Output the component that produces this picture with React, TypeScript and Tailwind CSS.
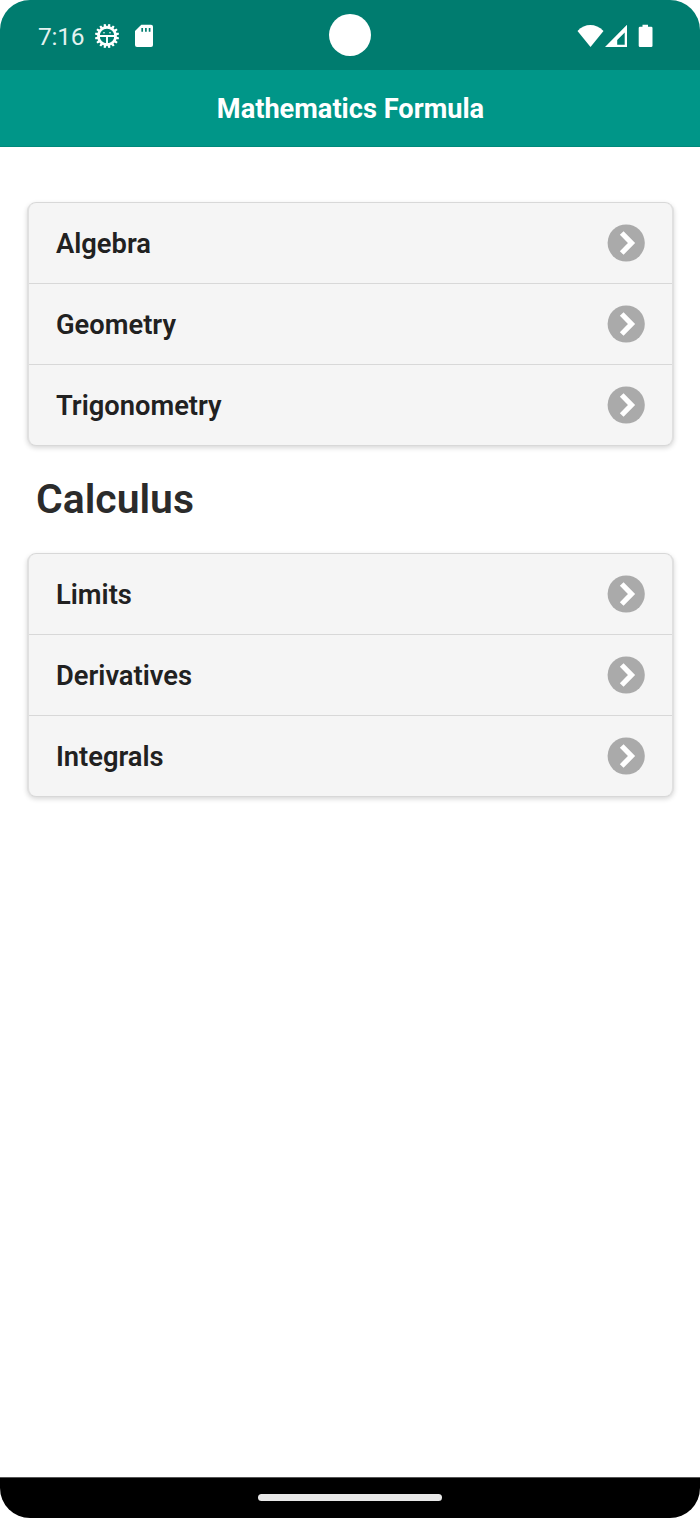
const basics = ["Algebra", "Geometry", "Trigonometry"];
const calculus = ["Limits", "Derivatives", "Integrals"];
const teeth = Array.from({ length: 16 }, (_, i) => 11.25 + i * 22.5);

function GearIcon() {
  return (
    <svg className="h-[26px] w-[26px]" viewBox="0 0 26 26" fill="none">
      <g fill="#fff">
        {teeth.map((a) => (
          <path key={a} d="M11.500 4.500L12 .9h2l.5 3.600z" transform={`rotate(${a} 13 13)`} />
        ))}
      </g>
      <circle cx="13" cy="13" r="8.600" stroke="#fff" strokeWidth="2.600" />
      <path d="M5 13h16M13 13v8" stroke="#fff" strokeWidth="1.900" />
      <circle cx="10" cy="9.800" r=".8" fill="#fff" />
      <circle cx="16" cy="9.800" r=".8" fill="#fff" />
    </svg>
  );
}

function StatusBar() {
  return (
    <div className="grid h-[70px] grid-cols-[1fr_42px_1fr] items-center bg-[#007c6f]">
      <div className="flex items-center pt-px pl-[38px]">
        <span className="w-[55.5px] pt-[2px] text-[24.5px] leading-8 tracking-[-0.2px] text-[#e4f2f0]">7:16</span>
        <GearIcon />
        <svg className="ml-[14.5px] h-6 w-[20px]" viewBox="0 0 20 24">
          <path d="M7.3 .7H17A2 2 0 0 1 19 2.7V21a2 2 0 0 1-2 2H3a2 2 0 0 1-2-2V7z" fill="#fff" />
          <path d="M8.2 4v3.8M11.9 4v3.8M15.6 4v3.8" stroke="#007c6f" strokeWidth="1.7" />
        </svg>
      </div>
      <div className="h-[42px] w-[42px] rounded-full bg-white" />
      <div className="flex items-center justify-end pt-px pr-[47px]">
        <svg className="h-6 w-[28px]" viewBox="0 0 28 24">
          <path d="M.5 7C8-.9 18.500-.9 26.500 7L13.500 23z" fill="#fff" />
        </svg>
        <svg className="h-6 w-[22px]" viewBox="0 0 22 24">
          <path d="M22 .7V23H0zM19.700 8.500L12.200 16v4.700h7.500z" fill="#fff" fillRule="evenodd" />
        </svg>
        <svg className="ml-[11px] h-6 w-[15px]" viewBox="0 0 15 24">
          <path d="M4.500 .7h5.500v2h3.200q1.300 0 1.300 1.300v17.700q0 1.300-1.300 1.300H2Q.7 23 .7 21.700V4Q.7 2.700 2 2.700h2.500z" fill="#fff" />
        </svg>
      </div>
    </div>
  );
}

function FormulaList({ items }: { items: string[] }) {
  return (
    <ul className="mr-[26px] ml-[27px] divide-y divide-[#d8d8d8] overflow-hidden rounded-[9px] border-x-2 border-y border-x-[#e0e0e0] border-y-[#d8d8d8] bg-[#f5f5f5] shadow-[0_2px_5px_rgba(0,0,0,0.16)]">
      {items.map((label) => (
        <li key={label} className="flex h-[81px] items-center justify-between px-[27px] last:h-[80px]">
          <span className="pt-[2px] text-[27.3px] leading-8 font-semibold text-[#212121]">{label}</span>
          <svg className="h-[38px] w-[38px]" viewBox="0 0 38 38" fill="none">
            <circle cx="19.200" cy="19" r="18.600" fill="#aaa" />
            <path d="M14.700 9l9.800 10-9.800 10" stroke="#fff" strokeWidth="5.200" />
          </svg>
        </li>
      ))}
    </ul>
  );
}

export default function App() {
  return (
    <div className="h-[1518px] w-[700px] bg-white font-['Roboto',sans-serif]">
      <div className="flex h-full flex-col overflow-hidden rounded-[30px] bg-white">
        <StatusBar />
        <header className="flex h-[77px] items-center justify-center border-b border-[#00897b] bg-[#009688] pt-[2px] pl-px">
          <h1 className="text-[27.2px] leading-8 font-bold text-white">Mathematics Formula</h1>
        </header>
        <main className="flex-1 pt-[55px]">
          <FormulaList items={basics} />
          <h2 className="flex h-[107px] items-center pl-9 text-[40.9px] leading-none font-semibold text-[#2b2b2b]">Calculus</h2>
          <FormulaList items={calculus} />
        </main>
        <footer className="flex h-[41px] items-center justify-center border-t border-[#555] bg-black pb-[2px]">
          <div className="h-[7px] w-[184px] rounded-full bg-[#e8e8e8]" />
        </footer>
      </div>
    </div>
  );
}
